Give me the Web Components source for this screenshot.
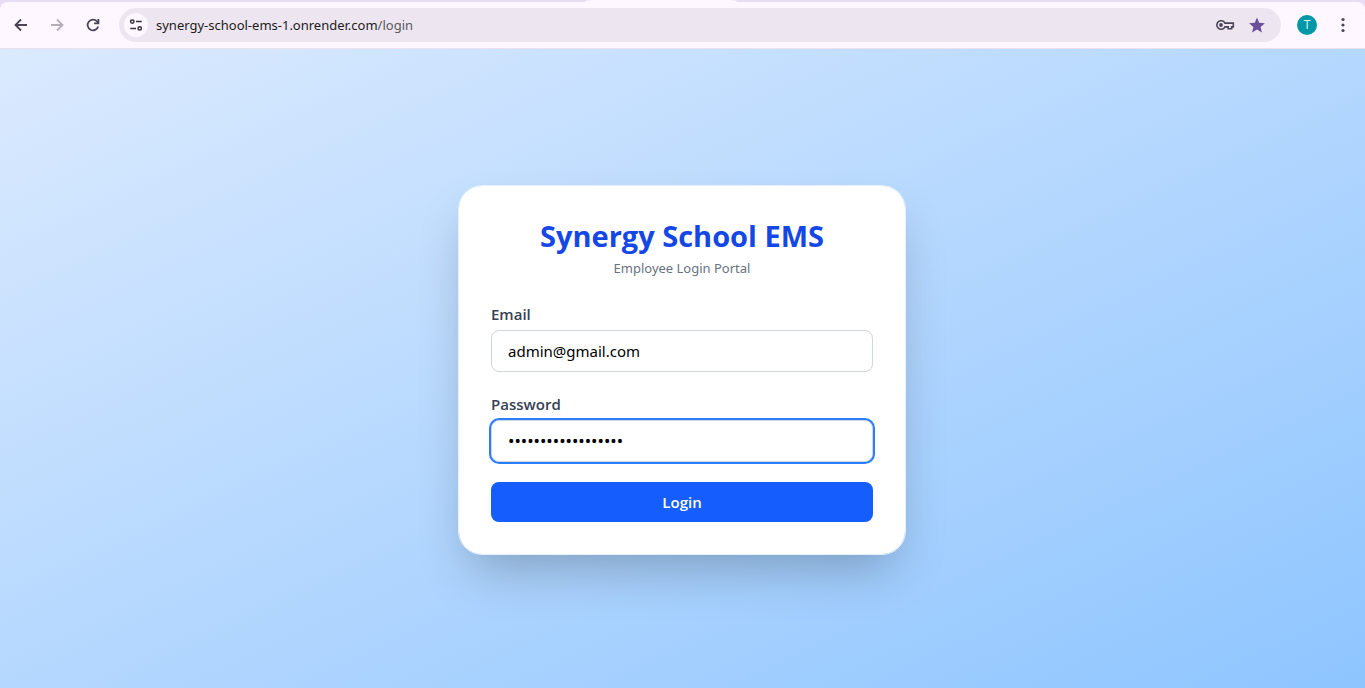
<!DOCTYPE html>
<html lang="en">
<head>
<meta charset="utf-8">
<title>Synergy School EMS</title>
<style>
  html, body { height: 100%; margin: 0; }
  body { font-family: "Open Sans", "Noto Sans", sans-serif; }
</style>
</head>
<body>
<app-window>
  <browser-bar slot="bar"><span slot="host">synergy-school-ems-1.onrender.com</span><span slot="path">/login</span></browser-bar>
  <login-card heading="Synergy School EMS" subheading="Employee Login Portal">
    <text-field label="Email" type="email" value="admin@gmail.com"></text-field>
    <text-field label="Password" type="password" value="synergyschooladmin" active></text-field>
    <submit-button>Login</submit-button>
  </login-card>
</app-window>

<script>
class AppWindow extends HTMLElement {
  constructor() {
    super();
    this.attachShadow({ mode: "open" }).innerHTML = `
      <style>
        :host { display: flex; flex-direction: column; min-height: 100%; }
        main {
          flex: 1; display: flex; align-items: center; justify-content: center;
          padding: 18px 17px 16px 16px;
          background: linear-gradient(to bottom right, #dbeafe, #8ec5ff);
        }
      </style>
      <slot name="bar"></slot>
      <main><slot></slot></main>`;
  }
}

class BrowserBar extends HTMLElement {
  constructor() {
    super();
    this.attachShadow({ mode: "open" }).innerHTML = `
      <style>
        :host { display: block; background: #e9ddf6; }
        .strip { display: flex; justify-content: center; height: 2px; padding-right: 44px; }
        .tab { width: 152px; background: #fef7ff; border-radius: 8px 8px 0 0 / 2px 2px 0 0; }
        .bar {
          display: flex; align-items: center; box-sizing: border-box; height: 47px;
          padding: 0 10px 0 9px; background: #fef7ff;
          border-bottom: 1px solid #ebe1ec; border-radius: 8px 8px 0 0;
        }
        button {
          display: grid; place-items: center; flex: none; width: 24px; height: 24px;
          margin: 0; padding: 0; border: 0; border-radius: 50%; background: none; color: #4a4458;
        }
        svg { display: block; }
        nav { display: flex; gap: 12px; }
        nav button:disabled { color: #b5aeb8; }
        .address {
          flex: 1; display: flex; align-items: center; box-sizing: border-box; height: 34px; min-width: 0;
          margin: 0 14px 0 14px; padding: 0 12px 0 5px;
          border-radius: 17px; background: #ede6f0;
        }
        .site { background: #fef7ff; color: #35313b; }
        .url { flex: 1; margin-left: 8px; font-family: "Noto Sans", sans-serif; font-size: 13px; line-height: 20px; white-space: nowrap; color: #1d1b20; }
        .path { color: #5b5662; }
        .tools { display: flex; gap: 8px; }
        .star { color: #6b4f9a; }
        .avatar { width: 24px; color: #d9f1f3; }
        .avatar span { width: 20px; height: 20px; border-radius: 50%; background: #0097a7; font: 12px/21px Roboto, sans-serif; }
        .menu { margin-left: 12px; }
      </style>
      <div class="strip"><div class="tab"></div></div>
      <div class="bar">
        <nav>
          <button aria-label="Back"><svg width="16" height="16" viewBox="0 0 16 16" fill="none" stroke="currentColor" stroke-width="1.8"><path d="M14 8H3M8 2.500 2.500 8 8 13.500"/></svg></button>
          <button aria-label="Forward" disabled><svg width="16" height="16" viewBox="0 0 16 16" fill="none" stroke="currentColor" stroke-width="1.8"><path d="M2 8h11M8 2.500 13.500 8 8 13.500"/></svg></button>
          <button aria-label="Reload"><svg width="16" height="16" viewBox="0 0 16 16" fill="none" stroke="currentColor" stroke-width="1.8"><path d="M13.200 9.500A5.400 5.400 0 1 1 12 4.300l1.500 1.600"/><path d="M13.400 2v4.400H9"/></svg></button>
        </nav>
        <div class="address">
          <button class="site" aria-label="View site information"><svg width="16" height="16" viewBox="0 0 16 16" fill="none" stroke="currentColor" stroke-width="1.500"><circle cx="4.300" cy="4.600" r="1.700"/><path d="M8 4.500h5.700M2.300 11.500H8"/><circle cx="11.700" cy="11.400" r="1.700"/></svg></button>
          <div class="url"><slot name="host"></slot><span class="path"><slot name="path"></slot></span></div>
          <div class="tools">
            <button aria-label="Saved passwords"><svg width="20" height="14" viewBox="0 0 20 14" fill="none" stroke="currentColor" stroke-width="1.600"><path d="M10 5.100A4.300 4.300 0 1 0 10 8.900h3.200v1.800h3.500V8.900h1.600V5.100z"/><circle cx="6" cy="7" r="1.900" fill="currentColor" stroke="none"/></svg></button>
            <button class="star" aria-label="Edit bookmark"><svg width="18" height="18" viewBox="0 0 18 18" fill="currentColor"><path d="M9 1.500l2.200 5.300 5.700.5-4.300 3.700 1.300 5.600L9 13.600l-4.900 3 1.300-5.600L1.100 7.300l5.700-.5z"/></svg></button>
          </div>
        </div>
        <button class="avatar" aria-label="Profile"><span>T</span></button>
        <button class="menu" aria-label="Menu"><svg width="4" height="16" viewBox="0 0 4 16" fill="currentColor"><circle cx="2" cy="2.500" r="1.600"/><circle cx="2" cy="8" r="1.600"/><circle cx="2" cy="13.500" r="1.600"/></svg></button>
      </div>`;
  }
}

class LoginCard extends HTMLElement {
  constructor() {
    super();
    this.attachShadow({ mode: "open" }).innerHTML = `
      <style>
        :host {
          display: block; box-sizing: border-box; width: 100%; max-width: 448px; padding: 32px;
          background: #fff; background-clip: padding-box;
          border: 1px solid #e4efff; border-radius: 24px;
          box-shadow: 0 25px 50px -12px rgb(0 0 0 / 0.25);
        }
        h1 { margin: 0; font-size: 29px; line-height: 36px; font-weight: 700; text-align: center; color: #1447e6; }
        p { margin: 4px 0 24px; font-family: "Noto Sans", sans-serif; font-size: 13px; line-height: 20px; text-align: center; color: #6a7282; }
        form { display: flex; flex-direction: column; gap: 20px; margin: 0; }
      </style>
      <h1></h1>
      <p></p>
      <form><slot></slot></form>`;
  }
  connectedCallback() {
    this.shadowRoot.querySelector("h1").textContent = this.getAttribute("heading");
    this.shadowRoot.querySelector("p").textContent = this.getAttribute("subheading");
  }
}

class TextField extends HTMLElement {
  constructor() {
    super();
    this.attachShadow({ mode: "open" }).innerHTML = `
      <style>
        :host { display: block; }
        label { display: block; margin-bottom: 4px; font-size: 15px; line-height: 24px; font-weight: 600; color: #364153; }
        input {
          display: block; box-sizing: border-box; width: 100%; height: 42px; margin: 0; padding: 8px 16px;
          border: 1px solid #d1d5dc; border-radius: 8px; background: #fff; color: #000;
          font-family: "Noto Sans", sans-serif; font-size: 15px; line-height: 24px; outline: none;
        }
        input[type="password"] { font-size: 17px; }
        :host([active]) input, input:focus { box-shadow: 0 0 0 2px #2b7fff; }
      </style>
      <label for="field"></label>
      <input id="field">`;
  }
  connectedCallback() {
    const input = this.shadowRoot.querySelector("input");
    this.shadowRoot.querySelector("label").textContent = this.getAttribute("label");
    input.type = this.getAttribute("type");
    input.value = this.getAttribute("value");
  }
}

class SubmitButton extends HTMLElement {
  constructor() {
    super();
    this.attachShadow({ mode: "open" }).innerHTML = `
      <style>
        :host { display: block; }
        button {
          display: block; width: 100%; margin: 0; padding: 8px 0; border: 0; border-radius: 8px;
          background: #155dfc; color: #fff;
          font-family: inherit; font-size: 15px; line-height: 24px; font-weight: 600;
        }
      </style>
      <button type="submit"><slot></slot></button>`;
  }
}

customElements.define("app-window", AppWindow);
customElements.define("browser-bar", BrowserBar);
customElements.define("login-card", LoginCard);
customElements.define("text-field", TextField);
customElements.define("submit-button", SubmitButton);
</script>
</body>
</html>
